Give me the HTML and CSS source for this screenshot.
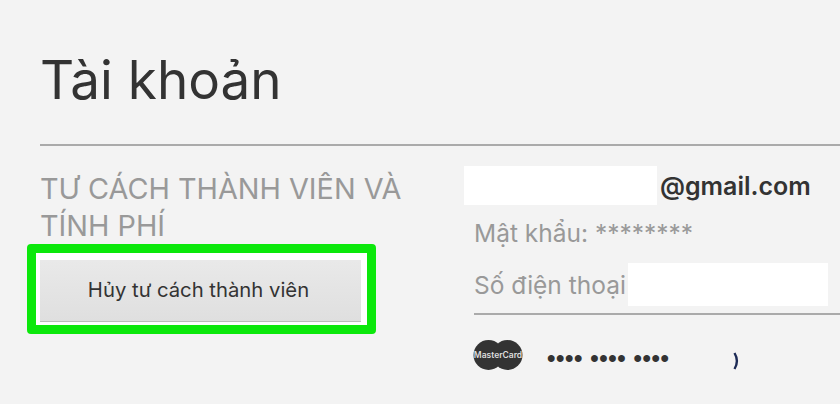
FILE: index.html
```html
<!DOCTYPE html>
<html lang="vi">
<head>
  <meta charset="UTF-8">
  <meta name="viewport" content="width=device-width, initial-scale=1.0">
  <title>Tài khoản</title>
  <link rel="stylesheet" href="styles.css">
</head>
<body>
  <div class="page">
    <h1 class="title">Tài khoản</h1>
    <div class="section">
      <div class="side">
        <h2 class="side-title">TƯ CÁCH THÀNH VIÊN VÀ TÍNH PHÍ</h2>
        <div class="highlight">
          <button class="cancel">Hủy tư cách thành viên</button>
        </div>
      </div>
      <div class="details">
        <div class="email-row">
          <span class="mask mask-email"></span>
          <span class="email">@gmail.com</span>
        </div>
        <div class="detail-row password">Mật khẩu: ********</div>
        <div class="detail-row phone">
          <span>Số điện thoại</span>
          <span class="mask mask-phone"></span>
        </div>
        <div class="card-row">
          <svg class="card-logo" width="50" height="30" viewBox="0 0 50 30">
            <circle cx="15.5" cy="15" r="15" fill="#333"/>
            <circle cx="34.5" cy="15" r="15" fill="#333"/>
            <text x="25" y="17.5" text-anchor="middle" class="card-logo-text">MasterCard</text>
          </svg>
          <span class="card-dots">•••• •••• ••••</span>
          <svg class="card-end" width="6" height="18" viewBox="0 0 6 18">
            <path d="M1.5 1 C4.5 6 4.5 12 1.5 17" fill="none" stroke="#1c2a55" stroke-width="2.4"/>
          </svg>
        </div>
      </div>
    </div>
  </div>
</body>
</html>
```
FILE: styles.css
```css
html, body {
  margin: 0;
  height: 100%;
}

body {
  background-color: #f3f3f3;
  font-family: "Inter", "Liberation Sans", sans-serif;
  overflow: hidden;
}

.page {
  padding: 49px 0 0 40px;
}

.title {
  margin: 0;
  height: 95px;
  border-bottom: 2px solid #aaa;
  font-size: 53px;
  line-height: 62px;
  font-weight: 400;
  color: #333;
}

.section {
  display: flex;
}

.side {
  width: 424px;
  flex-shrink: 0;
}

.side-title {
  margin: 24px 0 0;
  width: 380px;
  font-size: 28.8px;
  line-height: 37px;
  font-weight: 400;
  color: #999;
}

.highlight {
  box-sizing: border-box;
  width: 349px;
  height: 90px;
  margin: 0 0 0 -13px;
  padding: 7px 6px 3px 4px;
  border: 9px solid #0be80b;
  border-radius: 4px;
  background-color: white;
}

.cancel {
  display: block;
  width: 100%;
  height: 100%;
  padding: 0 4px 3px 0;
  border: 0;
  border-bottom: 1px solid #bbb;
  background: linear-gradient(#e9e9e9, #dfdfdf);
  font-family: inherit;
  font-size: 20.3px;
  color: #333;
}

.details {
  flex: 1;
}

.email-row {
  display: flex;
  align-items: center;
  margin-top: 20px;
}

.mask {
  display: block;
  background-color: white;
}

.mask-email {
  width: 193px;
  height: 39px;
}

.email {
  margin-left: 3px;
  font-size: 25px;
  font-weight: 600;
  color: #333;
}

.detail-row {
  margin-left: 10px;
  font-size: 24.5px;
  color: #999;
}

.password {
  margin-top: 11px;
  line-height: 34px;
}

.phone {
  display: flex;
  align-items: center;
  height: 43px;
  margin-top: 13px;
  padding-bottom: 7px;
  border-bottom: 2px solid #aaa;
}

.mask-phone {
  flex-shrink: 0;
  width: 200px;
  height: 43px;
  margin-left: auto;
  margin-right: 12px;
}

.card-row {
  display: flex;
  align-items: center;
  margin: 24px 0 0 9px;
}

.card-logo-text {
  font-size: 8.5px;
  font-weight: 600;
  fill: #ddd;
}

.card-dots {
  margin: 6px 0 0 24px;
  font-family: "Liberation Sans", sans-serif;
  font-size: 24px;
  line-height: 24px;
  letter-spacing: 0.6px;
  font-weight: 700;
  color: #333;
}

.card-end {
  margin: 13px 0 0 63px;
}
```
